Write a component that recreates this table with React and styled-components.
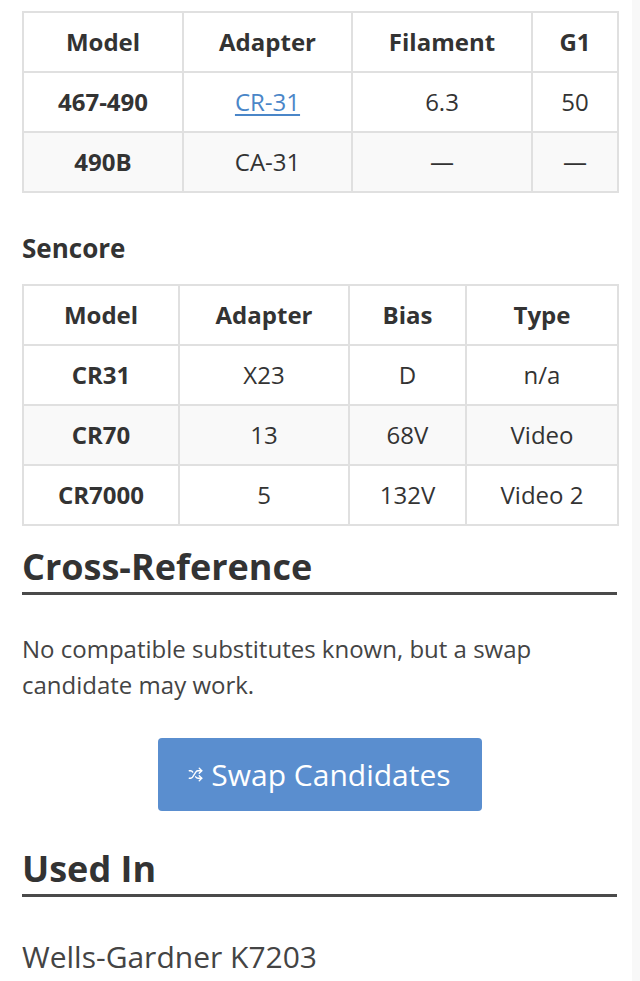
import React from "react";
import styled, { createGlobalStyle } from "styled-components";
import { Shuffle } from "lucide-react";

const Global = createGlobalStyle`
  html, body { margin: 0; padding: 0; background: #fff; }
  body { font-family: "Open Sans", "Liberation Sans", sans-serif; color: #333; }
`;

const Shell = styled.div`
  display: flex;
  min-height: 981px;
`;

const Main = styled.main`
  width: 632px;
  box-sizing: border-box;
  padding: 11px 15px 0 22px;
  background: #fff;
  display: flex;
  flex-direction: column;
`;

const Gutter = styled.div`
  flex: 1;
  background: #f8f8f8;
`;

const Table = styled.table`
  width: 595px;
  border-collapse: collapse;
  table-layout: fixed;
  font-size: 24px;
`;

const Col = styled.col`
  width: ${(p) => p.$w}px;
`;

const Row = styled.tr`
  background: ${(p) => (p.$shaded ? "#f9f9f9" : "#fff")};
`;

const Th = styled.th`
  border: 2px solid #e0e0e0;
  height: 56px;
  padding: 0 4px 2px;
  text-align: center;
  font-weight: 700;
  color: #333;
`;

const Td = styled.td`
  border: 2px solid #e0e0e0;
  height: 56px;
  padding: 0 4px 2px;
  text-align: center;
  font-weight: ${(p) => (p.$bold ? 700 : 400)};
  color: #333;
`;

const Link = styled.a`
  color: #4a86c8;
  text-decoration: underline;
  text-underline-offset: 3px;
`;

const SubHeading = styled.h3`
  margin: 37px 0 18px;
  font-size: 26px;
  line-height: 36px;
  font-weight: 700;
  color: #333;
`;

const SectionHeading = styled.h2`
  margin: ${(p) => p.$top}px 0 0;
  font-size: 36px;
  line-height: 44px;
  font-weight: 700;
  color: #333;
  padding-bottom: 3px;
  border-bottom: 3px solid #4a4a4a;
`;

const Para = styled.p`
  margin: 36px 0 0;
  font-size: 24px;
  line-height: 36px;
  color: #444;
`;

const ButtonRow = styled.div`
  display: flex;
  justify-content: center;
  margin-top: 35px;
`;

const Button = styled.button`
  display: inline-flex;
  align-items: center;
  gap: 8px;
  width: 324px;
  height: 73px;
  justify-content: center;
  background: #5a8ecf;
  border: none;
  border-radius: 4px;
  color: #fff;
  font-family: inherit;
  font-size: 30px;
  padding: 0;
`;

const Item = styled.div`
  margin-top: 40px;
  font-size: 30px;
  line-height: 40px;
  color: #444;
`;

function DataTable({ cols, head, rows }) {
  return (
    <Table>
      <colgroup>
        {cols.map((w, i) => (
          <Col key={i} $w={w} />
        ))}
      </colgroup>
      <thead>
        <Row>
          {head.map((h) => (
            <Th key={h}>{h}</Th>
          ))}
        </Row>
      </thead>
      <tbody>
        {rows.map((r, i) => (
          <Row key={i} $shaded={i % 2 === 1}>
            {r.map((c, j) => (
              <Td key={j} $bold={j === 0}>
                {c}
              </Td>
            ))}
          </Row>
        ))}
      </tbody>
    </Table>
  );
}

export default function App() {
  return (
    <Shell>
      <Global />
      <Main>
        <DataTable
          cols={[160, 169, 180, 86]}
          head={["Model", "Adapter", "Filament", "G1"]}
          rows={[
            ["467-490", <Link href="#">CR-31</Link>, "6.3", "50"],
            ["490B", "CA-31", "—", "—"],
          ]}
        />
        <SubHeading>Sencore</SubHeading>
        <DataTable
          cols={[156, 170, 117, 152]}
          head={["Model", "Adapter", "Bias", "Type"]}
          rows={[
            ["CR31", "X23", "D", "n/a"],
            ["CR70", "13", "68V", "Video"],
            ["CR7000", "5", "132V", "Video 2"],
          ]}
        />
        <SectionHeading $top={19}>Cross-Reference</SectionHeading>
        <Para>
          No compatible substitutes known, but a swap candidate may work.
        </Para>
        <ButtonRow>
          <Button>
            <Shuffle size={15} strokeWidth={2.2} />
            Swap Candidates
          </Button>
        </ButtonRow>
        <SectionHeading $top={36}>Used In</SectionHeading>
        <Item>Wells-Gardner K7203</Item>
      </Main>
      <Gutter />
    </Shell>
  );
}
